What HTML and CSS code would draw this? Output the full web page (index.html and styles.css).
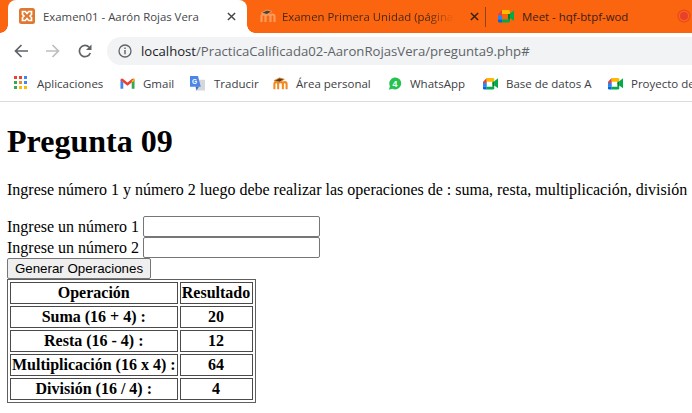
FILE: index.html
```
<!DOCTYPE html>
<html lang="es">
<head>
<meta charset="utf-8">
<title>Examen01</title>
<link rel="stylesheet" href="styles.css">
</head>
<body>
<svg class="defs" width="0" height="0" aria-hidden="true">
  <defs>
    <g id="meet">
      <path d="M4 2L0 6v1.500h4z" fill="#ea4335"/>
      <path d="M0 7.500v4h4v-4z" fill="#2684fc"/>
      <path d="M0 11.500V13q0 1.500 1.500 1.500H4v-3z" fill="#0066da"/>
      <path d="M4 2h6.500Q12 2 12 3.500V6H4z" fill="#ffba00"/>
      <path d="M4 11.500h8V13q0 1.500-1.500 1.500H4z" fill="#00ac47"/>
      <path d="M10 6h2v5.500h-2z" fill="#00832d"/>
      <path d="M12 5.500L16 2.500v10.500l-4-3z" fill="#00ac47"/>
      <path d="M10 8l2-2.500v5z" fill="#00832d"/>
    </g>
    <g id="moodle">
      <path d="M1.500 14V8.500q0-2 2-2t2 2V14M5.500 8.500q0-2 2.500-2t2.500 2V14M10.500 8.500q0-2 2-2t2 2V14" fill="none" stroke-width="2.200"/>
      <path d="M1 5L7 2l5 1.500L7 6.500z" fill="#45413c"/>
    </g>
  </defs>
</svg>
<div class="chrome">
  <div class="tabstrip">
    <div class="tab active">
      <svg class="fav" viewBox="0 0 16 16"><rect width="16" height="16" rx="2.500" fill="#e0782f"/><path d="M3.500 3.500h2.800L8 5.500l1.700-2h2.800V6.500L11 8l1.500 1.500v3H9.700L8 10.500l-1.700 2H3.500v-3L5 8 3.500 6.500z" fill="none" stroke="#fff" stroke-width="1.700"/></svg>
      <span class="tabtitle">Examen01 - Aarón Rojas Vera</span>
      <svg class="close" viewBox="0 0 10 10"><path d="M1 1l8 8M9 1l-8 8" stroke="#45464a" stroke-width="1.600"/></svg>
    </div>
    <div class="tab second">
      <svg class="fav moodle-tab" viewBox="0 0 16 16"><use href="#moodle"/></svg>
      <span class="tabtitle">Examen Primera Unidad (página</span>
      <svg class="close" viewBox="0 0 10 10"><path d="M1 1l8 8M9 1l-8 8" stroke="#332015" stroke-width="1.600"/></svg>
    </div>
    <div class="sep"></div>
    <div class="tab third">
      <svg class="fav" viewBox="0 0 16 16"><use href="#meet"/></svg>
      <span class="tabtitle">Meet - hqf-btpf-wod</span>
      <span class="rec"></span>
    </div>
  </div>
  <div class="toolbar">
    <svg class="nav" viewBox="0 0 14 14"><path d="M14 7H1.500M7.500 1L1.500 7l6 6" fill="none" stroke="#5f6368" stroke-width="1.700"/></svg>
    <svg class="nav" viewBox="0 0 14 14"><path d="M0 7h12.500M6.500 1l6 6-6 6" fill="none" stroke="#bcbec1" stroke-width="1.700"/></svg>
    <svg class="nav" viewBox="0 0 14 14"><path d="M12.300 9A5.600 5.600 0 1 1 11.200 3.300" fill="none" stroke="#5f6368" stroke-width="1.700"/><path d="M13.500 .5v5.500H8z" fill="#5f6368"/></svg>
    <div class="omnibox">
      <svg class="info" viewBox="0 0 14 14"><circle cx="7" cy="7" r="6" fill="none" stroke="#5f6368" stroke-width="1.300"/><path d="M7 6v4.300M7 3.500v1.400" stroke="#5f6368" stroke-width="1.400"/></svg>
      <span class="url"><span class="host">localhost</span>/PracticaCalificada02-AaronRojasVera/pregunta9.php#</span>
    </div>
  </div>
  <div class="bookmarks">
    <div class="bm b-apps"><svg class="bmi" viewBox="0 0 14 14"><rect x="0" y="0" width="3" height="3" fill="#ea4335"/><rect x="5" y="0" width="3" height="3" fill="#ea4335"/><rect x="10" y="0" width="3" height="3" fill="#4285f4"/><rect x="0" y="5" width="3" height="3" fill="#34a853"/><rect x="5" y="5" width="3" height="3" fill="#ea8a35"/><rect x="10" y="5" width="3" height="3" fill="#4285f4"/><rect x="0" y="10" width="3" height="3" fill="#34a853"/><rect x="5" y="10" width="3" height="3" fill="#fbbc04"/><rect x="10" y="10" width="3" height="3" fill="#fbbc04"/></svg>Aplicaciones</div>
    <div class="bm b-gmail"><svg class="bmi" viewBox="0 0 16 16"><path d="M.5 4v9.500h3V7z" fill="#4285f4"/><path d="M12.500 7v6.500h3V4z" fill="#34a853"/><path d="M.5 4.500Q.5 2 3 2.800L8 6.800l5-4Q15.500 2 15.500 4.500L12.500 7 8 10.500 3.500 7z" fill="#ea4335"/><path d="M12.500 4.900L15.500 2.700V5L12.500 7z" fill="#fbbc04"/></svg>Gmail</div>
    <div class="bm b-trad"><svg class="bmi" viewBox="0 0 16 16"><rect x="6" y="4" width="10" height="11.500" fill="#d5d7da"/><path d="M0 0h8.500l3 11.500H0z" fill="#4a86e8"/><path d="M6 11.500l1 4 2.500-4z" fill="#3b6fc9"/><text x="2.200" y="8" class="gt">G</text></svg>Traducir</div>
    <div class="bm b-area"><svg class="bmi moodle-bm" viewBox="0 0 16 16"><use href="#moodle"/></svg>Área personal</div>
    <div class="bm b-wa"><svg class="bmi" viewBox="0 0 16 16"><path d="M1 15l1.200-4A6.800 6.800 0 1 1 5 13.900z" fill="#25c24f"/><text x="5" y="11.500" class="wa">4</text></svg>WhatsApp</div>
    <div class="bm b-base"><svg class="bmi" viewBox="0 0 16 16"><use href="#meet"/></svg>Base de datos A</div>
    <div class="bm b-proy"><svg class="bmi" viewBox="0 0 16 16"><use href="#meet"/></svg>Proyecto de</div>
  </div>
</div>
<main class="page">
  <h1>Pregunta 09</h1>
  <p>Ingrese número 1 y número 2 luego debe realizar las operaciones de : suma, resta, multiplicación, división</p>
  <form>
    <div class="row">Ingrese un número 1 <input type="text"></div>
    <div class="row">Ingrese un número 2 <input type="text"></div>
    <div class="row"><input type="button" value="Generar Operaciones"></div>
    <table>
      <tr><th>Operación</th><th class="res">Resultado</th></tr>
      <tr><th>Suma (16 + 4) :</th><th>20</th></tr>
      <tr><th>Resta (16 - 4) :</th><th>12</th></tr>
      <tr><th>Multiplicación (16 x 4) :</th><th>64</th></tr>
      <tr><th>División (16 / 4) :</th><th>4</th></tr>
    </table>
  </form>
</main>
</body>
</html>
```
FILE: styles.css
```
html, body { margin: 0; padding: 0; overflow: hidden; background: #fff; }
body { width: 692px; height: 413px; font-family: "Liberation Serif", serif; font-size: 16px; color: #000; }
.defs { position: absolute; }
.chrome { font-family: "Open Sans", "Noto Sans", sans-serif; border-bottom: 1px solid #dadce0; overflow: hidden; }
.tabstrip { display: flex; align-items: center; height: 33px; background: #fb6510; padding-left: 8px; overflow: hidden; }
.tab { display: flex; align-items: center; height: 33px; flex: none; box-sizing: border-box; position: relative; padding-bottom: 1px; }
.tab.active { width: 239px; background: #fff; border-radius: 8px 8px 0 0; padding-left: 11px; color: #45464a; }
.tab.active::before, .tab.active::after { content: ""; position: absolute; bottom: 0; width: 8px; height: 8px; }
.tab.active::before { left: -8px; background: radial-gradient(circle at 0 0, #fb6510 7.500px, #fff 8px); }
.tab.active::after { right: -8px; background: radial-gradient(circle at 100% 0, #fb6510 7.500px, #fff 8px); }
.tab.second { width: 238px; padding-left: 13px; }
.tab.third { padding-left: 12px; width: 206px; }
.sep { width: 1px; height: 20px; background: #8f4512; flex: none; }
.fav { width: 16px; height: 16px; flex: none; }
.tabtitle { font-size: 11.400px; white-space: nowrap; flex: none; }
.active .tabtitle { width: 176px; margin-left: 8px; }
.second .tabtitle { width: 172px; margin-left: 6px; color: #4a2812; -webkit-mask-image: linear-gradient(to right, #000 85%, transparent); mask-image: linear-gradient(to right, #000 85%, transparent); }
.third .tabtitle { width: 155px; margin-left: 8px; color: #3b2013; }
.close { width: 9px; height: 9px; flex: none; }
.active .close { margin-left: 8px; }
.second .close { margin-left: 16px; }
.moodle-tab { stroke: #f89b5a; }
.moodle-bm { stroke: #f28a1f; }
.rec { width: 8px; height: 8px; border-radius: 50%; background: #e8402c; box-shadow: 0 0 0 1.500px #fb6510, 0 0 0 2.500px #e8402c; flex: none; margin-left: 3px; }
.toolbar { display: flex; align-items: center; height: 36px; background: #fff; padding-left: 14px; }
.nav { width: 14px; height: 14px; flex: none; margin-right: 18px; }
.omnibox { flex: 1; height: 28px; background: #f1f3f4; border-radius: 14px 0 0 14px; display: flex; align-items: center; padding-left: 11px; margin-left: -3px; }
.info { width: 14px; height: 14px; flex: none; margin-right: 9px; }
.url { font-size: 13.150px; color: #5f6368; white-space: nowrap; }
.host { color: #202124; }
.bookmarks { display: flex; align-items: center; height: 28px; padding-bottom: 4px; background: #fff; padding-left: 14px; }
.bm { display: flex; align-items: center; font-size: 11.500px; color: #3c4043; white-space: nowrap; flex: none; }
.bmi { width: 15px; height: 15px; flex: none; margin-right: 8px; }
.b-apps { width: 106px; }
.b-apps .bmi { width: 14px; height: 14px; margin-right: 9px; }
.b-gmail { width: 70px; }
.b-trad { width: 83px; }
.b-trad .bmi { margin-right: 9px; }
.b-area { width: 115px; }
.b-wa { width: 95px; }
.b-wa .bmi { width: 14px; }
.b-base { width: 125px; }
.gt { font-size: 7px; fill: #fff; font-family: "Liberation Sans", sans-serif; font-weight: bold; }
.wa { font-size: 10px; fill: #fff; font-family: "Liberation Sans", sans-serif; font-weight: bold; }
.page { padding: 0 7px; width: 760px; }
h1 { font-size: 32px; font-weight: bold; margin: 21px 0; line-height: 37px; }
p { margin: 16px 0 17px; line-height: 18px; white-space: nowrap; }
.row { display: flex; align-items: center; gap: 4px; height: 21px; line-height: 21px; }
input[type=text] { box-sizing: border-box; width: 177px; height: 21px; padding: 1px 2px; border: 1px solid #767676; border-radius: 2px; font-size: 13px; font-family: "Liberation Sans", sans-serif; margin: 0; background: #fff; }
input[type=button] { box-sizing: border-box; display: block; width: 144px; height: 21px; font-family: "Liberation Sans", sans-serif; font-size: 13.333px; padding: 1px 6px; border: 1px solid #767676; border-radius: 2px; background: #efefef; color: #000; margin: 0; }
table { border-spacing: 2px; border: 1px solid #5f5f5f; border-collapse: separate; }
th { border: 1px solid #4a4a4a; padding: 1px; font-weight: bold; line-height: 18px; }
.res { width: 69px; }
```
